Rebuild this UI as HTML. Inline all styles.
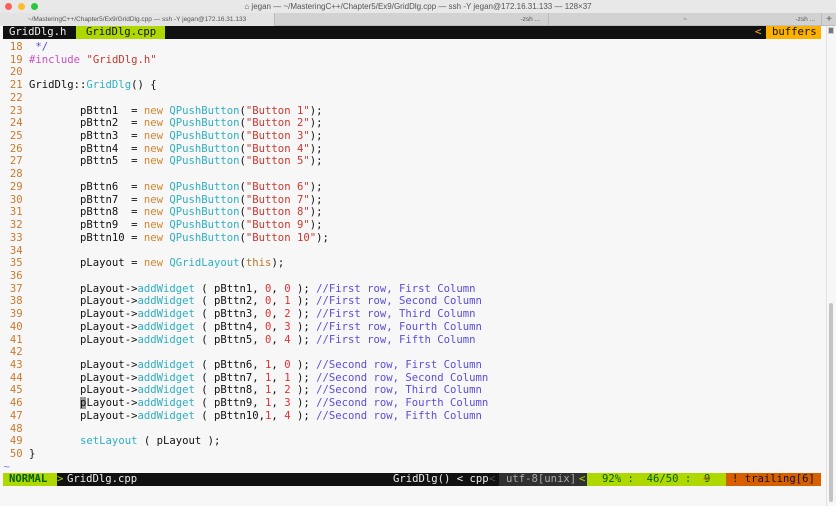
<!DOCTYPE html>
<html><head><meta charset="utf-8"><style>
*{margin:0;padding:0;box-sizing:border-box}
body{width:836px;height:506px;overflow:hidden;background:#f7f7f7;position:relative;font-family:"Liberation Sans",sans-serif}
.title{position:absolute;left:0;top:0;width:836px;height:13px;background:#e9e8e9;font-size:8px;color:#555;text-align:center;line-height:13px}
.dot{position:absolute;top:3px;width:7px;height:7px;border-radius:50%}
.tabs{position:absolute;left:0;top:13px;width:836px;height:13px;background:#d3d2d3;border-bottom:1px solid #bdbdbd;font-size:6.5px;color:#555;line-height:13px}
.tabs div{position:absolute;top:0;height:13px}
.mono{font-family:"DejaVu Sans Mono","Liberation Mono",monospace;font-size:10.6px;white-space:pre}
.tl{position:absolute;top:26px;left:3px;width:818px;height:13px;background:#111;line-height:13px}
pre{position:absolute;left:3.5px;top:41px;line-height:12.72px;color:#111}
.n{color:#c87a2e}.k{color:#d2862f}.t{color:#2fb0c0}.s{color:#c8392f}.c{color:#5a4fd6}.d{color:#d33}.p{color:#c94fc4}.th{color:#b8752a}
.st{position:absolute;top:473px;left:3px;width:818px;height:13px;background:#111;line-height:13px;color:#eee}
.st span{position:absolute;top:0;height:13px}
</style></head><body>
<div class="title"><span class="dot" style="left:5px;background:#fc5f57"></span><span class="dot" style="left:18px;background:#fdbc2e"></span><span class="dot" style="left:31px;background:#28c840"></span>⌂ jegan — ~/MasteringC++/Chapter5/Ex9/GridDlg.cpp — ssh -Y jegan@172.16.31.133 — 128×37</div>
<div class="tabs">
<div style="left:0;width:274px;background:#e4e3e4;text-align:center">~/MasteringC++/Chapter5/Ex9/GridDlg.cpp — ssh -Y jegan@172.16.31.133</div>
<div style="left:274px;width:274px;border-left:1px solid #bbb;text-align:right;padding-right:8px">-zsh ...</div>
<div style="left:548px;width:273px;border-left:1px solid #bbb;text-align:center">~</div>
<div style="left:680px;width:141px;text-align:right;padding-right:6px">-zsh ...</div>
<div style="left:821px;width:15px;border-left:1px solid #bbb;text-align:center;font-size:10px">+</div>
</div>
<div class="tl mono"><span style="position:absolute;left:0;width:72px;color:#eee;padding-left:6px">GridDlg.h</span><span style="position:absolute;left:73px;width:89px;background:#afd700;color:#111;padding-left:10px">GridDlg.cpp</span><span style="position:absolute;left:752px;color:#fcb000">&lt;</span><span style="position:absolute;left:763px;width:55px;background:#fcb000;color:#111;padding-left:6px">buffers</span></div>
<div style="position:absolute;left:828px;top:27px;width:6px;height:7px;background:#777;border:1px solid #ccc"></div>
<div style="position:absolute;left:829px;top:303px;width:4px;height:199px;background:#c4c4c4;border-radius:2px"></div>
<div style="position:absolute;left:826px;top:26px;width:1px;height:480px;background:#e2e2e2"></div>
<pre class="mono"><span class="n"> 18</span>  <span class="c">*/</span>
<span class="n"> 19</span> <span class="p">#include</span> <span class="s">"GridDlg.h"</span>
<span class="n"> 20</span>
<span class="n"> 21</span> GridDlg::<span class="t">GridDlg</span>() {
<span class="n"> 22</span>
<span class="n"> 23</span>         pBttn1  = <span class="k">new</span> <span class="t">QPushButton</span>(<span class="s">"Button 1"</span>);
<span class="n"> 24</span>         pBttn2  = <span class="k">new</span> <span class="t">QPushButton</span>(<span class="s">"Button 2"</span>);
<span class="n"> 25</span>         pBttn3  = <span class="k">new</span> <span class="t">QPushButton</span>(<span class="s">"Button 3"</span>);
<span class="n"> 26</span>         pBttn4  = <span class="k">new</span> <span class="t">QPushButton</span>(<span class="s">"Button 4"</span>);
<span class="n"> 27</span>         pBttn5  = <span class="k">new</span> <span class="t">QPushButton</span>(<span class="s">"Button 5"</span>);
<span class="n"> 28</span>
<span class="n"> 29</span>         pBttn6  = <span class="k">new</span> <span class="t">QPushButton</span>(<span class="s">"Button 6"</span>);
<span class="n"> 30</span>         pBttn7  = <span class="k">new</span> <span class="t">QPushButton</span>(<span class="s">"Button 7"</span>);
<span class="n"> 31</span>         pBttn8  = <span class="k">new</span> <span class="t">QPushButton</span>(<span class="s">"Button 8"</span>);
<span class="n"> 32</span>         pBttn9  = <span class="k">new</span> <span class="t">QPushButton</span>(<span class="s">"Button 9"</span>);
<span class="n"> 33</span>         pBttn10 = <span class="k">new</span> <span class="t">QPushButton</span>(<span class="s">"Button 10"</span>);
<span class="n"> 34</span>
<span class="n"> 35</span>         pLayout = <span class="k">new</span> <span class="t">QGridLayout</span>(<span class="th">this</span>);
<span class="n"> 36</span>
<span class="n"> 37</span>         pLayout-&gt;<span class="t">addWidget</span> ( pBttn1, <span class="d">0</span>, <span class="d">0</span> ); <span class="c">//First row, First Column</span>
<span class="n"> 38</span>         pLayout-&gt;<span class="t">addWidget</span> ( pBttn2, <span class="d">0</span>, <span class="d">1</span> ); <span class="c">//First row, Second Column</span>
<span class="n"> 39</span>         pLayout-&gt;<span class="t">addWidget</span> ( pBttn3, <span class="d">0</span>, <span class="d">2</span> ); <span class="c">//First row, Third Column</span>
<span class="n"> 40</span>         pLayout-&gt;<span class="t">addWidget</span> ( pBttn4, <span class="d">0</span>, <span class="d">3</span> ); <span class="c">//First row, Fourth Column</span>
<span class="n"> 41</span>         pLayout-&gt;<span class="t">addWidget</span> ( pBttn5, <span class="d">0</span>, <span class="d">4</span> ); <span class="c">//First row, Fifth Column</span>
<span class="n"> 42</span>
<span class="n"> 43</span>         pLayout-&gt;<span class="t">addWidget</span> ( pBttn6, <span class="d">1</span>, <span class="d">0</span> ); <span class="c">//Second row, First Column</span>
<span class="n"> 44</span>         pLayout-&gt;<span class="t">addWidget</span> ( pBttn7, <span class="d">1</span>, <span class="d">1</span> ); <span class="c">//Second row, Second Column</span>
<span class="n"> 45</span>         pLayout-&gt;<span class="t">addWidget</span> ( pBttn8, <span class="d">1</span>, <span class="d">2</span> ); <span class="c">//Second row, Third Column</span>
<span class="n"> 46</span>         <span style="background:#999">p</span>Layout-&gt;<span class="t">addWidget</span> ( pBttn9, <span class="d">1</span>, <span class="d">3</span> ); <span class="c">//Second row, Fourth Column</span>
<span class="n"> 47</span>         pLayout-&gt;<span class="t">addWidget</span> ( pBttn10,<span class="d">1</span>, <span class="d">4</span> ); <span class="c">//Second row, Fifth Column</span>
<span class="n"> 48</span>
<span class="n"> 49</span>         <span class="t">setLayout</span> ( pLayout );
<span class="n"> 50</span> }
<span style="color:#8a7fe0">~</span></pre>
<div class="st mono">
<span style="left:0;width:54px;background:#afd700;color:#005f00;font-weight:bold;padding-left:6px">NORMAL</span>
<span style="left:54px;color:#afd700">&gt;</span>
<span style="left:64px;color:#eee">GridDlg.cpp</span>
<span style="left:390px;color:#eee">GridDlg() &lt; cpp</span>
<span style="left:486px;color:#555">&lt;</span>
<span style="left:496px;width:89px;background:#303030;color:#aaa;padding-left:7px">utf-8[unix]</span>
<span style="left:576px;color:#afd700">&lt;</span>
<span style="left:584px;width:139px;background:#afd700;color:#005f00;padding-left:15px">92% :  46/50 :  9</span>
<span style="left:700px;color:#d75f00">&lt;</span>
<span style="left:723px;width:95px;background:#d75f00;color:#111;padding-left:6px">! trailing[6]</span>
</div>
</body></html>
